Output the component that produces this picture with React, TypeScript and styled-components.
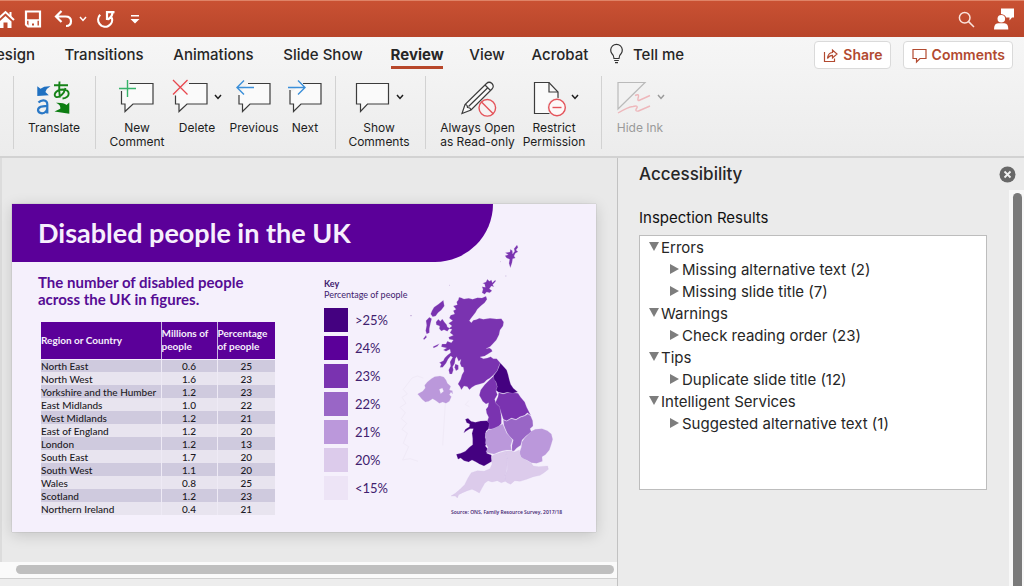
import React from "react";
import styled, { createGlobalStyle } from "styled-components";

const ui = `Inter, "Liberation Sans", sans-serif`;
const slideFont = `Lato, "Open Sans", sans-serif`;

const GlobalStyle = createGlobalStyle`
  * { box-sizing: border-box; }
  body { margin: 0; background: #ebebeb; font-family: ${ui}; color: #262626; overflow: hidden; }
  button { font: inherit; color: inherit; background: none; border: 0; padding: 0; margin: 0; }
  h1, h2, h3, p, ul { margin: 0; padding: 0; }
  ul { list-style: none; }
  svg { display: block; flex: none; overflow: visible; }
`;

const Window = styled.div`
  display: flex;
  flex-direction: column;
  min-height: 100vh;
`;

const TitleBar = styled.header`
  display: flex;
  align-items: center;
  justify-content: space-between;
  height: 37px;
  padding: 0 10px 0 0;
  border-top: 1px solid #df8367;
  background: linear-gradient(#c95133, #b8452a);
  color: #fff;
  overflow: hidden;
`;

const QuickTools = styled.div`
  display: flex;
  align-items: center;
  margin-left: -2px;
`;

const QuickButton = styled.button<{ $width: number }>`
  display: flex;
  justify-content: center;
  width: ${(p) => p.$width}px;
`;

const TitleActions = styled.div`
  display: flex;
  align-items: center;
  gap: 19px;
`;

const Ribbon = styled.section`
  border-bottom: 2px solid #d2d2d2;
  background: linear-gradient(#f6f6f6, #f2f2f2 40%, #ececec);
`;

const TabRow = styled.nav`
  display: flex;
  align-items: center;
  height: 36px;
  padding-right: 11px;
  font-size: 15px;
  font-weight: 500;
  line-height: 20px;
`;

const Tab = styled.button<{ $width: number; $active?: boolean; $start?: boolean }>`
  display: flex;
  justify-content: ${(p) => (p.$start ? "flex-start" : "center")};
  width: ${(p) => p.$width}px;
  margin-left: ${(p) => (p.$start ? -4 : 0)}px;
  white-space: nowrap;
  font-weight: ${(p) => (p.$active ? 700 : 500)};
`;

const TabLabel = styled.span<{ $active?: boolean }>`
  padding: 4px 0 1px;
  border-bottom: 3px solid ${(p) => (p.$active ? "#b7472a" : "transparent")};
`;

const TellMe = styled.button`
  display: flex;
  align-items: center;
  gap: 9px;
  margin-left: 6px;
  white-space: nowrap;
`;

const TabActions = styled.div`
  display: flex;
  gap: 12px;
  margin-left: auto;
`;

const ActionButton = styled.button`
  display: flex;
  align-items: center;
  gap: 5px;
  height: 28px;
  padding: 0 7px 0 8px;
  border: 1px solid #dadada;
  border-radius: 4px;
  background: #fff;
  color: #b24a30;
  font-size: 14px;
  font-weight: 600;
`;

const ToolRow = styled.div`
  display: flex;
  padding: 3px 0 7px 13px;
`;

const ToolGroup = styled.div<{ $before: number; $after: number }>`
  display: flex;
  padding: 3px ${(p) => p.$after}px 0 ${(p) => p.$before}px;
  border-left: 1px solid #d2d2d2;
`;

const Tool = styled.button<{ $width: number; $dim?: boolean }>`
  display: flex;
  flex-direction: column;
  align-items: center;
  gap: 6px;
  width: ${(p) => p.$width}px;
  color: ${(p) => (p.$dim ? "#9a9a9a" : "#1d1d1d")};
  font-size: 12px;
  line-height: 14px;
  white-space: nowrap;
`;

const ToolIcon = styled.span`
  display: flex;
  align-items: center;
  gap: 5px;
`;

const ToolLabel = styled.span`
  height: 28px;
  white-space: pre-line;
`;

const Workspace = styled.div`
  display: flex;
  flex: 1;
`;

const Editor = styled.main`
  display: flex;
  flex: 1;
  flex-direction: column;
  min-width: 0;
  border-right: 1px solid #c2c2c2;
  background: #e9e9e9;
`;

const Canvas = styled.div`
  flex: 1;
  padding: 46px 21px 0 10px;
  border-left: 2px solid #dcdcdc;
`;

const HorizontalTrack = styled.div`
  height: 17px;
  padding: 3px 3px 4px 16px;
  border-bottom: 1px solid #d0d0d0;
  background: #fafafa;
`;

const HorizontalThumb = styled.div`
  height: 9px;
  border-radius: 5px;
  background: #bfbfbf;
`;

const EditorFoot = styled.div`
  height: 7px;
  background: #ededed;
`;

const Slide = styled.article`
  display: grid;
  grid-template-columns: 312px 66px minmax(0, 1fr);
  grid-template-rows: 58px auto;
  min-height: 328px;
  background: #f5f0fc;
  box-shadow: 0 3px 14px rgba(0, 0, 0, 0.16), 0 0 1px rgba(0, 0, 0, 0.3);
  font-family: ${slideFont};
  color: #40206e;
`;

const SlideHeader = styled.header`
  grid-area: 1 / 1 / 2 / 4;
  display: flex;
  align-items: center;
  margin-right: 103px;
  padding-left: 26px;
  border-bottom-right-radius: 58px;
  background: #5b0099;
`;

const SlideTitle = styled.h1`
  color: #f6effc;
  font-size: 27px;
  font-weight: 700;
  line-height: 36px;
  white-space: nowrap;
`;

const Facts = styled.section`
  grid-area: 2 / 1 / 3 / 2;
  padding: 12px 48px 0 26px;
`;

const FactsTitle = styled.h2`
  margin-bottom: 14px;
  color: #560c94;
  font-size: 15px;
  font-weight: 700;
  line-height: 17px;
  white-space: pre-line;
`;

const DataTable = styled.table`
  width: 234px;
  margin-left: 3px;
  border-collapse: collapse;
  table-layout: fixed;
  color: #1c1a24;
  font-size: 10px;
  line-height: 12px;
`;

const HeadCell = styled.th<{ $width: number }>`
  width: ${(p) => p.$width}px;
  height: 37px;
  padding: 0;
  border-right: 1px solid #cbb5e0;
  border-bottom: 1px solid #f5f0fc;
  background: #5b0099;
  color: #f6effc;
  line-height: 13px;
  text-align: left;
  white-space: pre-line;
  &:last-child { border-right: 0; }
`;

const DataRow = styled.tr`
  background: #e8e4ef;
  &:nth-child(odd) { background: #cfcade; }
`;

const RowName = styled.th`
  height: 13px;
  padding: 0;
  border-right: 1px solid #eeeaf5;
  font-weight: 500;
  text-align: left;
  white-space: nowrap;
`;

const Cell = styled.td`
  padding: 0;
  border-right: 1px solid #eeeaf5;
  font-weight: 500;
  text-align: center;
  &:last-child { border-right: 0; }
`;

const Key = styled.section`
  grid-area: 2 / 2 / 3 / 3;
  padding-top: 16px;
  font-size: 9px;
  line-height: 11px;
  white-space: nowrap;
`;

const KeyTitle = styled.h3`
  font-size: 9px;
  font-weight: 700;
`;

const KeyList = styled.ul`
  display: flex;
  flex-direction: column;
  gap: 4px;
  margin-top: 8px;
`;

const KeyItem = styled.li`
  display: flex;
  align-items: center;
  gap: 7px;
  font-size: 13px;
  line-height: 24px;
`;

const Swatch = styled.span<{ $color: string }>`
  width: 24px;
  height: 24px;
  background: ${(p) => p.$color};
`;

const MapArea = styled.figure`
  grid-area: 1 / 3 / 3 / 4;
  margin: 0;
  padding-top: 26px;
`;

const Source = styled.figcaption`
  padding: 1px 0 0 61px;
  font-family: "Open Sans", sans-serif;
  font-size: 5px;
  font-weight: 600;
  line-height: 12px;
  white-space: nowrap;
`;

const Panel = styled.aside`
  display: flex;
  flex-direction: column;
  width: 406px;
  background: #ebebeb;
`;

const PanelHeader = styled.div`
  display: flex;
  align-items: center;
  justify-content: space-between;
  height: 32px;
  padding: 0 8px 0 21px;
`;

const PanelTitle = styled.h2`
  font-size: 17px;
  font-weight: 500;
  line-height: 22px;
`;

const PanelBody = styled.div`
  display: flex;
  flex: 1;
`;

const Results = styled.section`
  flex: 1;
  padding: 18px 22px 0 21px;
`;

const ResultsTitle = styled.h3`
  margin-bottom: 7px;
  color: #111;
  font-size: 15px;
  font-weight: 400;
  line-height: 20px;
`;

const Tree = styled.ul`
  min-height: 255px;
  padding: 1px 9px;
  border: 1px solid #bdbdbd;
  background: #fff;
`;

const TreeRow = styled.button<{ $child?: boolean }>`
  display: flex;
  align-items: center;
  gap: ${(p) => (p.$child ? 3 : 2)}px;
  height: 22px;
  padding-left: ${(p) => (p.$child ? 21 : 0)}px;
  font-size: 15px;
  line-height: 22px;
  white-space: nowrap;
`;

const VerticalTrack = styled.div`
  width: 15px;
  padding: 3px 2px 0 4px;
  background: #f8f8f8;
`;

const VerticalThumb = styled.div`
  height: 100%;
  border-radius: 5px 5px 0 0;
  background: #7a7a7a;
`;

const Chevron = () => (
  <svg width="8" height="6" viewBox="0 0 8 6" fill="none" stroke="currentColor" strokeWidth="1.5" aria-hidden="true">
    <path d="M1 1 4 4.400 7 1" />
  </svg>
);

const Glyph = ({ children }: { children: React.ReactNode }) => (
  <svg width="36" height="36" viewBox="0 0 36 36" fill="none" stroke="#3c3c3c" strokeWidth="1.2" aria-hidden="true">
    {children}
  </svg>
);

const TranslateIcon = () => (
  <Glyph>
    <path d="M1.300 7.200 4.500 9.700Q8 7 14.500 7.300 11 9 9.400 12.900L12.800 16.200 1.300 17Z" fill="#1f70c1" stroke="none" />
    <path d="M2.500 23.500Q4.500 21.200 7.500 21.300 11.300 21.400 11.300 25.500V34.500M11.300 26.800 7 27.300Q2 27.900 2 31.200 2.300 34.200 6 34.300 10.800 34 11.300 29" stroke="#2a78c6" strokeWidth="2.200" />
    <path d="M18 6.300H32M23.500 2.500C23 9 22.800 13.500 24.200 18.500M29.500 9C28 15.500 23 18.600 20.300 18 16.800 17 19 10.500 27 10.500 34.800 10.700 34.500 18.500 26.500 19.500" stroke="#168318" strokeWidth="1.900" />
    <path d="M33.300 23.500 30.500 26Q28 23.600 20 23.800 25 26 24.300 29.800L18.500 32.500 33.300 34.800Z" fill="#0d7d12" stroke="none" />
  </Glyph>
);
const NewCommentIcon = () => (
  <Glyph>
    <path d="M10.500 4.500H34V25H14L6 32.500V25H2.500V12H10.500Z" fill="#fafafa" stroke="none" />
    <path d="M10.500 4.500H34V25H14L6 32.500V25H2.500V12" />
    <path d="M0 9.500H17M8.500 1V18" stroke="#37b36a" strokeWidth="1.4" />
  </Glyph>
);
const DeleteIcon = () => (
  <Glyph>
    <path d="M15 4.500H34V25H14L6 32.500V25H2.500V16Z" fill="#fafafa" stroke="none" />
    <path d="M16 4.500H34V25H14L6 32.500V25H2.500V16.500" />
    <path d="M0 1 14.500 15.500M14.500 1 0 15.500" stroke="#e8474e" strokeWidth="1.3" />
  </Glyph>
);
const PreviousIcon = () => (
  <Glyph>
    <path d="M12 4.500H34V25H14L6 32.500V25H3V15Z" fill="#fafafa" stroke="none" />
    <path d="M12 4.500H34V25H14L6.500 32.500V25H3V16" />
    <path d="M18 8.500H1M8 1.500 1 8.500 8 15.500" stroke="#3b8fd9" strokeWidth="1.4" />
  </Glyph>
);
const NextIcon = () => (
  <Glyph>
    <path d="M16 4.500H34V25H14L6 32.500V25H3V14Z" fill="#fafafa" stroke="none" />
    <path d="M16 4.500H34V25H14L6.500 32.500V25H3V11" />
    <path d="M1 8.500H18M11 1.500 18 8.500 11 15.500" stroke="#3b8fd9" strokeWidth="1.4" />
  </Glyph>
);
const CommentIcon = () => (
  <Glyph>
    <path d="M1.500 4.500H33.500V25H12.500L5.500 32.500V25H1.500Z" fill="#fafafa" />
  </Glyph>
);
const ReadOnlyIcon = () => (
  <Glyph>
    <path d="M2 34.500 5 25.500 26.500 4.500Q29 2 32 4.500 34.500 7.500 32 10L11 31ZM5 25.500Q7.500 25.500 7.500 28.500 10.500 28.500 11 31M25 6 30.500 11.500M8.500 27.500 28 8.500" fill="#fafafa" />
    <circle cx="27.300" cy="28.800" r="8.300" fill="#f6f2f2" stroke="#e4535a" strokeWidth="1.4" />
    <path d="M21.500 23 33.200 34.700" stroke="#e4535a" strokeWidth="1.4" />
  </Glyph>
);
const RestrictIcon = () => (
  <Glyph>
    <path d="M4.500 3.500H19L28 13V34.500H4.500Z" fill="#fafafa" />
    <path d="M19 3.500V13H28" />
    <circle cx="27" cy="28.500" r="9.800" fill="#efefef" stroke="none" />
    <circle cx="27" cy="28.500" r="8.300" fill="#fdf8f8" stroke="#e4535a" strokeWidth="1.4" />
    <path d="M22.500 28.500H31.500" stroke="#e4535a" strokeWidth="1.4" />
  </Glyph>
);
const InkIcon = () => (
  <Glyph>
    <path d="M2 30V3.500H29Z" fill="#f2f2f2" stroke="#bababa" />
    <path d="M19 16.500Q23 14.500 22.500 17.500 21 22 23 21.500L34 16.500M2 34Q12 28 17 27.500 23 26 20.500 29.500 18.500 32.500 22.500 32L34 27" stroke="#eeb7bb" strokeWidth="1.4" />
  </Glyph>
);

const HomeIcon = () => (
  <svg width="17" height="19" viewBox="0 0 17 19" aria-hidden="true">
    <path d="M-1 10 7.500 2 16 10" fill="none" stroke="#fff" strokeWidth="2" />
    <path d="M1.500 11.500 7.500 6 13.500 11.500V18H9.500V12.500H5.500V18H1.500Z" fill="#fff" />
    <path d="M11.500 2H13.500V7H11.500Z" fill="#fff" />
  </svg>
);
const SaveIcon = () => (
  <svg width="18" height="18" viewBox="0 0 18 18" fill="none" stroke="#fff" aria-hidden="true">
    <path d="M2 1.500H16V16.500H4L2 14.500Z" strokeWidth="2.200" />
    <path d="M2 10H16" strokeWidth="1.500" />
    <path d="M4.500 10H13.500V17H10V13.500H8V17H4.500Z" fill="#fff" stroke="none" />
  </svg>
);
const UndoIcon = () => (
  <svg width="19" height="18" viewBox="0 0 19 18" fill="none" stroke="#fff" strokeWidth="2.200" aria-hidden="true">
    <path d="M7.500 1 2 6.500 7.500 12M2 6.500H11.500Q17 6.500 17 11.300 17 16 12 16" />
  </svg>
);
const RedoIcon = () => (
  <svg width="19" height="19" viewBox="0 0 19 19" fill="none" stroke="#fff" strokeWidth="2.200" aria-hidden="true">
    <path d="M3.200 4.800A7 7 0 1 0 14.800 7.500M10 10V2.200H17.500M10.500 9.500Q14.500 8 15.500 3" />
  </svg>
);
const CustomizeIcon = () => (
  <svg width="10" height="9" viewBox="0 0 10 9" fill="#fff" aria-hidden="true">
    <path d="M1 0H9V1.500H1ZM.5 4H9.500L5 8.500Z" />
  </svg>
);
const SearchIcon = () => (
  <svg width="17" height="17" viewBox="0 0 17 17" fill="none" stroke="#fbe3dc" strokeWidth="1.500" aria-hidden="true">
    <circle cx="6.700" cy="6.700" r="5.300" />
    <path d="M10.600 10.600 16 16" />
  </svg>
);
const PersonIcon = () => (
  <svg width="20" height="22" viewBox="0 0 20 22" fill="#fff" aria-hidden="true">
    <path d="M7 0.500H20V9.500H18L15.500 12.500V9.500H12Q11.500 6.500 7 6Z" />
    <circle cx="7.300" cy="10.800" r="3.800" />
    <path d="M0 21.500Q0 15.200 4 15.200H10.500Q14.300 15.200 14.300 21.500Z" />
  </svg>
);
const BulbIcon = () => (
  <svg width="15" height="20" viewBox="0 0 15 20" fill="none" stroke="#333" strokeWidth="1.200" aria-hidden="true">
    <path d="M5 13.500Q5 10.500 3 8.800A5.800 5.800 0 1 1 12 8.800Q10 10.500 10 13.500ZM5.200 15.500H9.800M6 17.700H9" />
  </svg>
);
const ShareIcon = () => (
  <svg width="15" height="15" viewBox="0 0 15 15" fill="none" stroke="#b24a30" strokeWidth="1.200" aria-hidden="true">
    <path d="M1.500 4V13.500H11.500V10.500M4.500 10.500Q4.800 5 9.500 4.500V2L14 6 9.500 10V7.300Q6.500 7.300 4.500 10.500Z" />
  </svg>
);
const SmallCommentIcon = () => (
  <svg width="15" height="15" viewBox="0 0 15 15" fill="none" stroke="#b24a30" strokeWidth="1.200" aria-hidden="true">
    <path d="M1 1.500H14V10.500H8L4.500 14V10.500H1Z" />
  </svg>
);
const CloseIcon = () => (
  <svg width="17" height="17" viewBox="0 0 17 17" aria-hidden="true">
    <circle cx="8.500" cy="8.500" r="8" fill="#686868" />
    <path d="M5.500 5.500 11.500 11.500M11.500 5.500 5.500 11.500" stroke="#f3f3f3" strokeWidth="1.800" />
  </svg>
);
const Disclosure = ({ open }: { open?: boolean }) => (
  <svg width={open ? 10 : 9} height="12" viewBox={open ? "0 0 10 12" : "0 0 9 12"} fill="#7d7d7d" aria-hidden="true">
    <path d={open ? "M0 0H10L5 9Z" : "M0 0 9 5 0 10Z"} />
  </svg>
);

const regions: { fill: string; paths: string[] }[] = [
  {
    fill: "#7a33b0",
    paths: [
      "M207 202 213 203 222 207 236 205 248 208 262 203 276 204 288 199 291 208 284 218 272 228 262 238 256 248 250 256 242 266 238 272 244 278 250 271 258 269 268 265 280 268 300 265 320 267 334 266 341 276 339 288 330 300 327 314 319 330 308 342 300 350 288 356 298 354 304 358 307 364 294 372 284 378 270 381 280 386 292 384 302 380 310 386 320 386 331 399 326 410 322 422 311 434 300 444 290 450 282 458 270 462 256 466 246 472 238 479 232 470 222 468 214 479 210 470 204 462 212 448 216 434 222 424 220 412 214 410 210 400 213 388 206 394 200 380 196 386 194 400 188 410 190 420 186 432 179 432 176 420 182 408 180 396 188 382 182 378 174 388 168 400 158 412 150 412 154 402 148 398 160 392 164 384 172 376 182 368 180 358 168 364 160 360 170 354 154 350 156 342 168 342 172 334 184 338 190 330 178 328 176 322 190 316 180 308 186 298 176 296 186 288 176 280 188 272 178 264 182 256 194 252 190 242 198 238 190 228 202 224 200 216 205 210Z",
      "M138 276 145 268 151 274 157 267 163 276 170 284 172 291 179 295 172 304 162 299 154 303 148 296 149 288 139 284Z",
      "M160 211 163 228 154 240 144 248 137 258 128 260 122 252 126 242 132 232 146 222Z",
      "M118 262 125 266 121 282 118 296 118 308 110 312 107 302 110 286 108 272Z",
      "M108 316 110 322 102 329 100 326Z",
      "M129 350 148 341 142 349 131 354Z",
      "M196 402 205 406 205 418 198 422 194 412Z",
      "M292 148 298 154 304 150 307 158 316 150 317 154 308 164 312 170 304 168 298 176 306 182 299 188 290 186 284 193 276 188 279 178 276 170 286 172 284 162 278 160 288 156Z",
      "M381 45 384 52 378 60 384 65 376 70 372 78 376 84 368 86 366 98 361 113 357 100 359 88 350 84 345 77 355 74 346 68 360 66 361 58 367 62 368 72 374 64 372 56Z",
      "M310 439 296 452 284 464 272 480 268 496 278 514 288 522 296 518 294 530 288 538 290 550 296 562 290 578 294 586 298 598 310 596 326 590 334 580 334 562 332 546 330 532 318 520 314 508 322 494 318 482 322 470 318 456Z",
      "M326 488 340 492 352 488 370 488 384 490 392 502 404 516 410 532 422 556 412 548 404 556 390 560 378 568 364 564 350 572 340 568 334 550 328 530 316 518 324 500Z",
    ],
  },
  { fill: "#440180", paths: [
    "M331 399 342 411 350 420 354 433 358 449 362 463 370 475 383 486 368 490 352 487 340 490 326 487 318 481 322 470 318 456 312 448 310 438 322 422 327 410Z",
    "M226 568 234 565 243 574 256 577 272 573 290 572 298 580 296 596 288 604 286 622 290 638 286 648 294 658 290 670 304 675 306 694 296 700 282 708 268 702 258 696 246 690 236 696 222 692 212 684 204 688 199 673 212 670 226 664 238 652 248 644 248 626 246 610 250 596 240 596 230 602 221 609 226 598 238 590 239 582 230 578Z",
  ] },
  { fill: "#9966c6", paths: ["M340 570 350 574 364 566 378 570 392 562 404 558 414 552 422 558 428 572 429 588 420 596 424 606 408 618 396 630 392 646 380 654 372 663 366 662 366 646 370 630 360 620 352 610 346 596 342 586Z"] },
  { fill: "#bb98db", paths: [
    "M326 588 338 582 344 596 350 610 360 620 367 630 362 646 364 660 350 660 338 662 326 666 312 672 300 670 288 666 294 652 286 640 288 626 286 610 294 600 310 596Z",
    "M424 604 436 598 456 596 472 602 484 612 488 628 484 642 478 660 466 674 456 680 457 694 440 700 424 698 410 690 396 686 388 670 394 652 396 636 404 624Z",
    "M112 456 124 446 134 440 150 438 161 441 168 450 172 460 182 469 178 480 187 482 188 492 183 486 178 494 184 500 178 514 168 520 158 516 148 520 138 512 128 506 116 514 106 516 96 508 90 500 83 492 98 484 106 474 104 466ZM148 478 157 474 161 484 152 491Z",
  ] },
  { fill: "#dccbeb", paths: [
    "M362 662 374 666 388 660 392 680 404 688 424 700 430 708 446 710 473 708 475 718 462 728 450 736 430 740 410 748 390 754 374 752 362 763 352 758 346 754 344 738 352 720 352 690 346 664Z",
    "M346 664 352 690 350 720 344 740 346 754 334 758 322 752 306 756 294 752 284 760 276 774 268 789 256 782 246 778 232 782 218 788 206 794 202 804 196 798 183 798 196 790 210 778 224 764 234 744 244 728 262 722 282 724 300 716 306 702 304 680 312 674 330 668Z",
  ] },
];

const UkMap = () => (
  <svg width="180" height="275" viewBox="0 0 540 825" role="img" aria-label="Map of the United Kingdom">
    <g fill="none" stroke="#f0eaf7" strokeWidth="3">
      <path d="M100 444 82 438 66 444 54 460 40 478 52 492 36 502 48 520 30 532 46 548 34 566 50 580 36 598 52 610 40 640 56 650 38 690 60 686 84 694M158 646 166 520M236 512 226 524 238 530" />
      <path d="M60 257H66M178 166H180M330 95H332M346 138H349" stroke="#c9b5dd" />
    </g>
    {regions.map((region) => (
      <g key={region.fill} fill={region.fill} fillRule="evenodd" stroke="#ceb6e4" strokeWidth="1" strokeOpacity=".6">
        {region.paths.map((d) => (
          <path key={d} d={d} />
        ))}
      </g>
    ))}
  </svg>
);

const tabs = [
  { label: "esign", width: 54, start: true },
  { label: "Transitions", width: 108 },
  { label: "Animations", width: 111 },
  { label: "Slide Show", width: 108 },
  { label: "Review", width: 80, active: true },
  { label: "View", width: 60 },
  { label: "Acrobat", width: 86 },
];

type ToolSpec = { label: string; width: number; icon: React.ReactNode; menu?: boolean; dim?: boolean };
const groups: { before: number; after: number; tools: ToolSpec[] }[] = [
  { before: 0, after: 1, tools: [{ label: "Translate", width: 80, icon: <TranslateIcon /> }] },
  {
    before: 7,
    after: 10,
    tools: [
      { label: "New\nComment", width: 68, icon: <NewCommentIcon /> },
      { label: "Delete", width: 52, icon: <DeleteIcon />, menu: true },
      { label: "Previous", width: 62, icon: <PreviousIcon /> },
      { label: "Next", width: 40, icon: <NextIcon /> },
    ],
  },
  { before: 8, after: 11, tools: [{ label: "Show\nComments", width: 70, icon: <CommentIcon />, menu: true }] },
  {
    before: 11,
    after: 11,
    tools: [
      { label: "Always Open\nas Read-only", width: 81, icon: <ReadOnlyIcon /> },
      { label: "Restrict\nPermission", width: 72, icon: <RestrictIcon />, menu: true },
    ],
  },
  { before: 8, after: 0, tools: [{ label: "Hide Ink", width: 60, icon: <InkIcon />, menu: true, dim: true }] },
];

const rows: [string, string, string][] = [
  ["North East", "0.6", "25"],
  ["North West", "1.6", "23"],
  ["Yorkshire and the Humber", "1.2", "23"],
  ["East Midlands", "1.0", "22"],
  ["West Midlands", "1.2", "21"],
  ["East of England", "1.2", "20"],
  ["London", "1.2", "13"],
  ["South East", "1.7", "20"],
  ["South West", "1.1", "20"],
  ["Wales", "0.8", "25"],
  ["Scotland", "1.2", "23"],
  ["Northern Ireland", "0.4", "21"],
];

const keyItems = [
  { label: ">25%", color: "#440180" },
  { label: "24%", color: "#5b0099" },
  { label: "23%", color: "#7a33b0" },
  { label: "22%", color: "#9966c6" },
  { label: "21%", color: "#bb98db" },
  { label: "20%", color: "#dccbeb" },
  { label: "<15%", color: "#ede4f6" },
];

const results = [
  { title: "Errors", items: ["Missing alternative text (2)", "Missing slide title (7)"] },
  { title: "Warnings", items: ["Check reading order (23)"] },
  { title: "Tips", items: ["Duplicate slide title (12)"] },
  { title: "Intelligent Services", items: ["Suggested alternative text (1)"] },
];

export default function App() {
  return (
    <Window>
      <GlobalStyle />
      <TitleBar>
        <QuickTools>
          <QuickButton $width={17} aria-label="Home"><HomeIcon /></QuickButton>
          <QuickButton $width={36} aria-label="Save"><SaveIcon /></QuickButton>
          <QuickButton $width={24} aria-label="Undo"><UndoIcon /></QuickButton>
          <QuickButton $width={16} aria-label="Undo history"><Chevron /></QuickButton>
          <QuickButton $width={30} aria-label="Redo"><RedoIcon /></QuickButton>
          <QuickButton $width={28} aria-label="Customize toolbar"><CustomizeIcon /></QuickButton>
        </QuickTools>
        <TitleActions>
          <button aria-label="Search"><SearchIcon /></button>
          <button aria-label="Account"><PersonIcon /></button>
        </TitleActions>
      </TitleBar>

      <Ribbon>
        <TabRow>
          {tabs.map((t) => (
            <Tab key={t.label} $width={t.width} $active={t.active} $start={t.start}>
              <TabLabel $active={t.active}>{t.label}</TabLabel>
            </Tab>
          ))}
          <TellMe><BulbIcon />Tell me</TellMe>
          <TabActions>
            <ActionButton><ShareIcon />Share</ActionButton>
            <ActionButton><SmallCommentIcon />Comments</ActionButton>
          </TabActions>
        </TabRow>
        <ToolRow>
          {groups.map((g) => (
            <ToolGroup key={g.tools[0].label} $before={g.before} $after={g.after}>
              {g.tools.map((t) => (
                <Tool key={t.label} $width={t.width} $dim={t.dim}>
                  <ToolIcon>{t.icon}{t.menu && <Chevron />}</ToolIcon>
                  <ToolLabel>{t.label}</ToolLabel>
                </Tool>
              ))}
            </ToolGroup>
          ))}
        </ToolRow>
      </Ribbon>

      <Workspace>
        <Editor>
          <Canvas>
            <Slide>
              <SlideHeader><SlideTitle>Disabled people in the UK</SlideTitle></SlideHeader>
              <Facts>
                <FactsTitle>{"The number of disabled people\nacross the UK in figures."}</FactsTitle>
                <DataTable>
                  <thead>
                    <tr>
                      <HeadCell scope="col" $width={120}>Region or Country</HeadCell>
                      <HeadCell scope="col" $width={56}>{"Millions of\npeople"}</HeadCell>
                      <HeadCell scope="col" $width={58}>{"Percentage\nof people"}</HeadCell>
                    </tr>
                  </thead>
                  <tbody>
                    {rows.map(([name, millions, percent]) => (
                      <DataRow key={name}>
                        <RowName scope="row">{name}</RowName>
                        <Cell>{millions}</Cell>
                        <Cell>{percent}</Cell>
                      </DataRow>
                    ))}
                  </tbody>
                </DataTable>
              </Facts>
              <Key>
                <KeyTitle>Key</KeyTitle>
                <p>Percentage of people</p>
                <KeyList>
                  {keyItems.map((k) => (
                    <KeyItem key={k.label}><Swatch $color={k.color} />{k.label}</KeyItem>
                  ))}
                </KeyList>
              </Key>
              <MapArea>
                <UkMap />
                <Source>Source: ONS, Family Resource Survey, 2017/18</Source>
              </MapArea>
            </Slide>
          </Canvas>
          <HorizontalTrack><HorizontalThumb /></HorizontalTrack>
          <EditorFoot />
        </Editor>
        <Panel>
          <PanelHeader>
            <PanelTitle>Accessibility</PanelTitle>
            <button aria-label="Close"><CloseIcon /></button>
          </PanelHeader>
          <PanelBody>
            <Results>
              <ResultsTitle>Inspection Results</ResultsTitle>
              <Tree>
                {results.map((group) => (
                  <li key={group.title}>
                    <TreeRow><Disclosure open />{group.title}</TreeRow>
                    <ul>
                      {group.items.map((item) => (
                        <li key={item}><TreeRow $child><Disclosure />{item}</TreeRow></li>
                      ))}
                    </ul>
                  </li>
                ))}
              </Tree>
            </Results>
            <VerticalTrack><VerticalThumb /></VerticalTrack>
          </PanelBody>
        </Panel>
      </Workspace>
    </Window>
  );
}
